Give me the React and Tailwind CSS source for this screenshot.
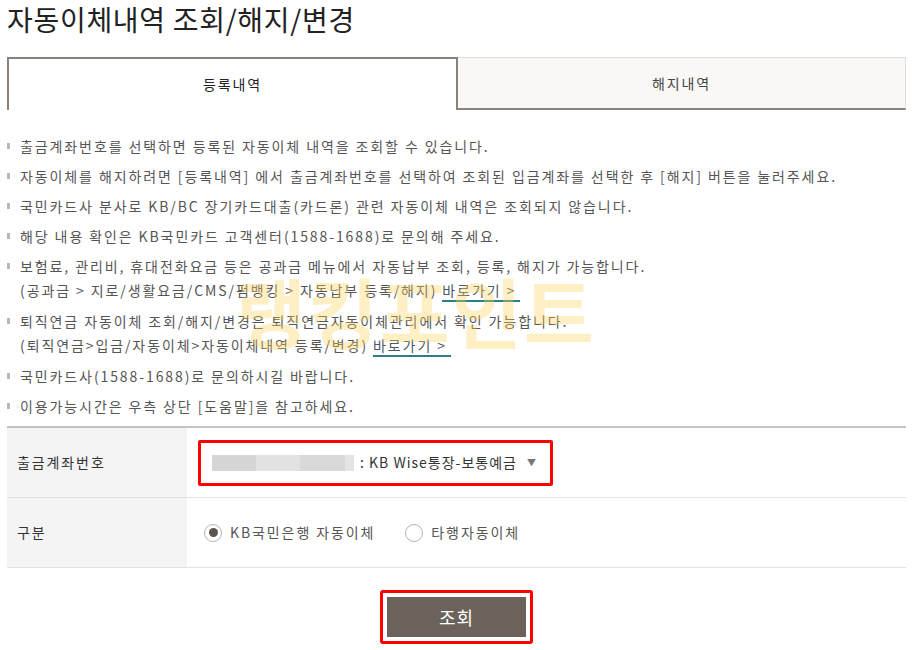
import React, { useState } from "react";

const notices = [
  { text: "출금계좌번호를 선택하면 등록된 자동이체 내역을 조회할 수 있습니다." },
  { text: "자동이체를 해지하려면 [등록내역] 에서 출금계좌번호를 선택하여 조회된 입금계좌를 선택한 후 [해지] 버튼을 눌러주세요." },
  { text: "국민카드사 분사로 KB/BC 장기카드대출(카드론) 관련 자동이체 내역은 조회되지 않습니다." },
  { text: "해당 내용 확인은 KB국민카드 고객센터(1588-1688)로 문의해 주세요." },
  {
    text: "보험료, 관리비, 휴대전화요금 등은 공과금 메뉴에서 자동납부 조회, 등록, 해지가 가능합니다.",
    sub: "(공과금 > 지로/생활요금/CMS/펌뱅킹 > 자동납부 등록/해지)",
  },
  {
    text: "퇴직연금 자동이체 조회/해지/변경은 퇴직연금자동이체관리에서 확인 가능합니다.",
    sub: "(퇴직연금>입금/자동이체>자동이체내역 등록/변경)",
  },
  { text: "국민카드사(1588-1688)로 문의하시길 바랍니다." },
  { text: "이용가능시간은 우측 상단 [도움말]을 참고하세요." },
];

const Radio = ({ checked, label, onClick }) => (
  <button type="button" onClick={onClick} className="flex items-center gap-[8px]">
    <span className="w-[18px] h-[18px] rounded-full border border-[#b5b5b5] bg-white flex items-center justify-center">
      {checked && <span className="w-[9px] h-[9px] rounded-full bg-[#5e5550]" />}
    </span>
    <span className="text-[14px] text-[#555] tracking-[1.9px]">{label}</span>
  </button>
);

export default function App() {
  const [tab, setTab] = useState(0);
  const [kind, setKind] = useState(0);

  return (
    <div
      className="relative w-[913px] h-[650px] overflow-hidden bg-white px-[7px]"
      style={{ fontFamily: '"Noto Sans CJK KR", "Noto Sans", sans-serif' }}
    >
      <h1 className="text-[28px] leading-[38px] text-[#222] tracking-[0.7px] h-[57px]">
        자동이체내역 조회/해지/변경
      </h1>

      {/* 탭 */}
      <div className="flex w-[899px] h-[53px] tracking-[1.9px]">
        <button
          type="button"
          onClick={() => setTab(0)}
          className={
            tab === 0
              ? "flex-1 bg-white border-2 border-b-0 border-[#8b8179] text-[14px] text-[#222]"
              : "flex-1 bg-[#f9f8f6] border-t border-[#dedede] border-b-2 border-b-[#8b8179] text-[14px] text-[#444]"
          }
        >
          등록내역
        </button>
        <button
          type="button"
          onClick={() => setTab(1)}
          className={
            tab === 1
              ? "flex-1 bg-white border-2 border-b-0 border-[#8b8179] text-[14px] text-[#222]"
              : "flex-1 bg-[#f9f8f6] border-t border-r border-[#dedede] border-b-2 border-b-[#8b8179] text-[14px] text-[#444]"
          }
        >
          해지내역
        </button>
      </div>

      {/* 안내문 */}
      <ul className="mt-[25px] flex flex-col gap-[8px] text-[14px] leading-[22px] text-[#555] tracking-[1.9px]">
        {notices.map((n, i) => (
          <li key={i} className="flex">
            <span className="w-[3px] h-[6px] bg-[#b8b8b8] mt-[8px] mr-[10px] shrink-0" />
            <div>
              <p>{n.text}</p>
              {n.sub && (
                <p className="mt-[2px]">
                  {n.sub}{" "}
                  <a href="#" className="inline-block border-b-2 border-[#2a7f88] text-[#4a5866] leading-[20px] pr-[4px]">
                    바로가기 &gt;
                  </a>
                </p>
              )}
            </div>
          </li>
        ))}
      </ul>

      {/* 조회조건 */}
      <div className="mt-[9px] w-[899px] border-t-2 border-[#c3c3c3] text-[14px] tracking-[1.9px]">
        <div className="flex h-[70px] border-b border-[#e2e2e2]">
          <div className="w-[180px] bg-[#f4f4f4] flex items-center pl-[10px] text-[#333]">출금계좌번호</div>
          <div className="flex items-center pl-[11px]">
            <div className="w-[355px] h-[46px] border-[3px] border-[#ff0000] rounded-[2px] flex items-center pl-[11px] pr-[14px]">
              <span className="w-[44px] h-[16px] bg-[#d6d6d6]" />
              <span className="w-[44px] h-[16px] bg-[#e2e2e2]" />
              <span className="w-[45px] h-[16px] bg-[#d9d9d9]" />
              <span className="w-[9px] h-[16px] bg-[#e4e4e4]" />
              <span className="ml-[6px] text-[#333] tracking-[1px]">: KB Wise통장-보통예금</span>
              <span className="ml-auto text-[9px] text-[#777] tracking-normal">▼</span>
            </div>
          </div>
        </div>
        <div className="flex h-[70px] border-b border-[#e2e2e2]">
          <div className="w-[180px] bg-[#f4f4f4] flex items-center pl-[10px] text-[#333]">구분</div>
          <div className="flex items-center gap-[30px] pl-[17px]">
            <Radio checked={kind === 0} label="KB국민은행 자동이체" onClick={() => setKind(0)} />
            <Radio checked={kind === 1} label="타행자동이체" onClick={() => setKind(1)} />
          </div>
        </div>
      </div>

      <div className="flex justify-center w-[899px] mt-[22px]">
        <div className="border-[3px] border-[#ff0000] rounded-[3px] p-[4px]">
          <button type="button" className="w-[139px] h-[40px] bg-[#6b625b] text-white text-[18px] tracking-[1px]">
            조회
          </button>
        </div>
      </div>

      {/* 블로그 워터마크 */}
      <div className="absolute left-[236px] top-[272px] text-[76px] font-bold leading-none text-[#ffd35c] opacity-35 tracking-[2px] pointer-events-none select-none">
        랭킹포인트
      </div>
    </div>
  );
}
